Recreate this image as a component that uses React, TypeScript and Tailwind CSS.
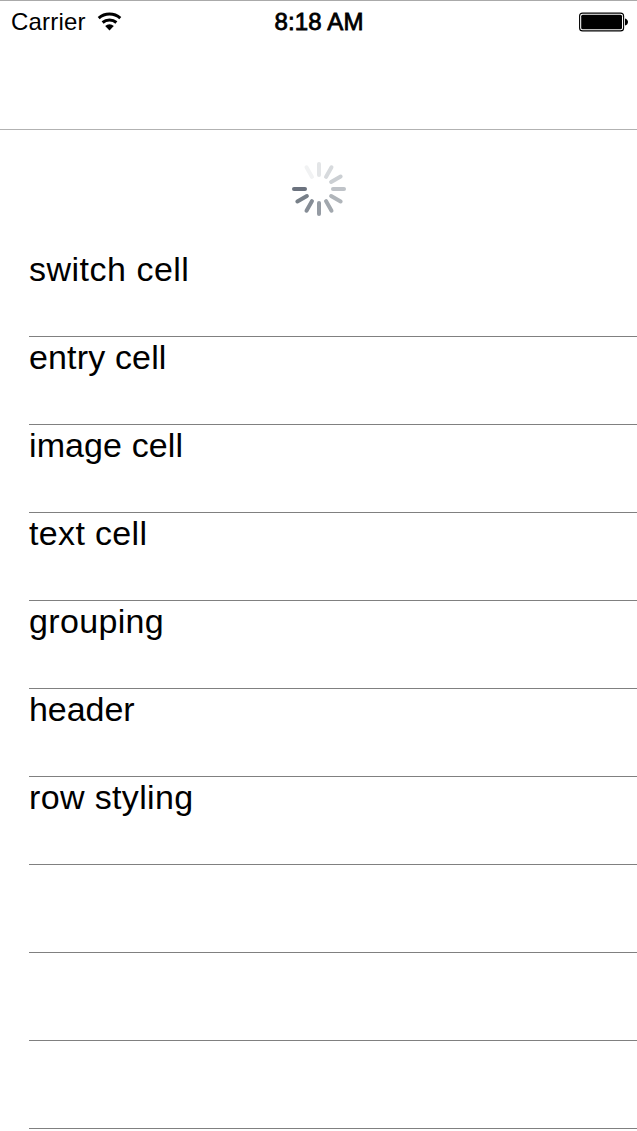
const rows = [
  { label: 'switch cell', tracking: 'tracking-[0.5px]' },
  { label: 'entry cell', tracking: 'tracking-[0.15px]' },
  { label: 'image cell', tracking: 'tracking-[0.1px]' },
  { label: 'text cell', tracking: 'tracking-[0.35px]' },
  { label: 'grouping', tracking: 'tracking-[0.35px]' },
  { label: 'header', tracking: 'tracking-[-0.05px]' },
  { label: 'row styling', tracking: 'tracking-[0.35px]' },
  { label: '', tracking: '' },
  { label: '', tracking: '' },
  { label: '', tracking: '' },
];

// Clockwise from twelve o'clock
const spokes = [
  '#e3e5e7', '#d7dadd', '#cbcfd3', '#bfc3c8', '#b0b5ba', '#a2a8ae',
  '#959ba3', '#868d96', '#788089', '#6b727e', '', '#f1f2f3',
];

function Spinner() {
  return (
    <svg width="56" height="56" viewBox="-28 -28 56 56">
      {spokes.map((color, i) =>
        color ? (
          <line key={i} x1="0" y1="-14" x2="0" y2="-25" stroke={color} strokeWidth="4" strokeLinecap="round" transform={`rotate(${i * 30})`} />
        ) : null,
      )}
    </svg>
  );
}

function Wifi() {
  return (
    <svg width="26" height="20" viewBox="0 0 26 20" fill="none" stroke="#000" strokeWidth="3">
      <path d="M1.7 7.1a16.5 16.5 0 0 1 21.6 0" />
      <path d="M5.6 11.5a10.5 10.5 0 0 1 13.8 0" />
      <path d="M8.2 15a6.3 6.3 0 0 1 8.6 0L12.5 19.5z" fill="#000" stroke="none" />
    </svg>
  );
}

function Battery() {
  return (
    <svg width="50" height="20" viewBox="0 0 50 20">
      <rect x="0.6" y="1.1" width="44" height="17.8" rx="3" fill="#fff" stroke="#000" strokeWidth="1.1" />
      <rect x="2.2" y="2.7" width="40.8" height="14.6" rx="1.5" />
      <path d="M46 6.5c4 1 4 6 0 7z" />
    </svg>
  );
}

function StatusBar() {
  return (
    <div className="grid h-[42px] grid-cols-[1fr_auto_1fr] items-center">
      <div className="flex items-center pl-[11px]">
        <span className="text-2xl leading-none tracking-[0.2px]">Carrier</span>
        <span className="-mt-0.5 ml-[11px]"><Wifi /></span>
      </div>
      <span className="pl-px text-2xl leading-none tracking-[0.15px] [-webkit-text-stroke:0.8px_#000]">8:18 AM</span>
      <div className="flex justify-end pr-2"><Battery /></div>
    </div>
  );
}

export default function App() {
  return (
    <div className="h-[1131px] w-[637px] overflow-hidden bg-white font-['Liberation_Sans',Arial,sans-serif] text-black">
      <header className="h-[130px] border-y border-t-[#aaa] border-b-[#b2b2b2]">
        <StatusBar />
      </header>
      <div className="flex h-[119px] justify-center pt-[31px]">
        <Spinner />
      </div>
      <ul className="pl-[29px]">
        {rows.map((row, i) => (
          <li key={i} className="h-[88px] border-b border-[#808080] text-[34px] leading-[40px]">
            <span className={row.tracking}>{row.label}</span>
          </li>
        ))}
      </ul>
    </div>
  );
}
